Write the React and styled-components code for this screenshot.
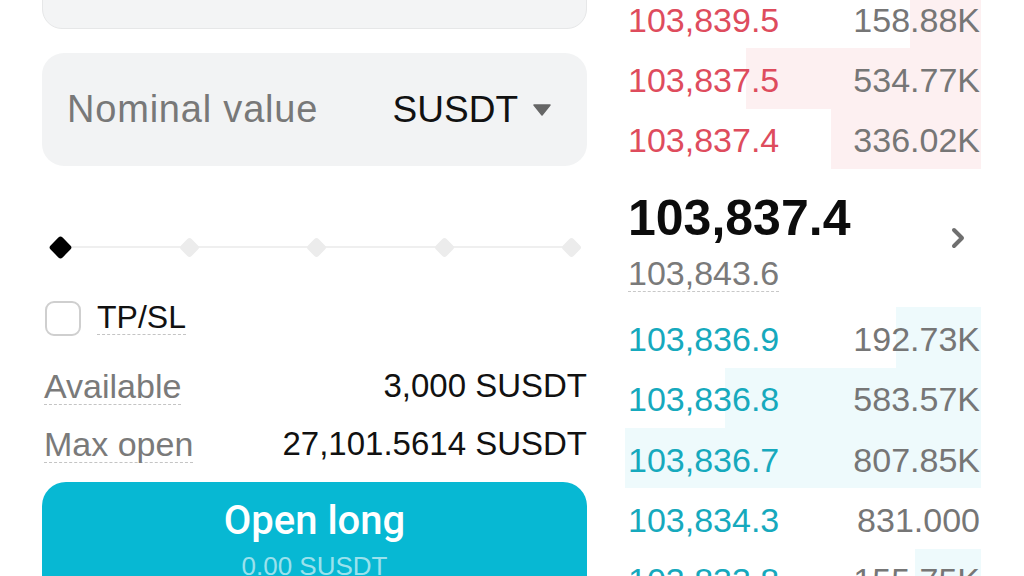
import React from "react";
import styled, { createGlobalStyle } from "styled-components";

const GlobalStyle = createGlobalStyle`
  html, body {
    margin: 0;
    padding: 0;
    background: #ffffff;
    font-family: "Liberation Sans", Arial, sans-serif;
  }
`;

const asks = [
  { price: "103,839.5", qty: "158.88K", depth: 20 },
  { price: "103,837.5", qty: "534.77K", depth: 66 },
  { price: "103,837.4", qty: "336.02K", depth: 42 },
];

const bids = [
  { price: "103,836.9", qty: "192.73K", depth: 24 },
  { price: "103,836.8", qty: "583.57K", depth: 72 },
  { price: "103,836.7", qty: "807.85K", depth: 100 },
  { price: "103,834.3", qty: "831.000", depth: 0 },
  { price: "103,833.8", qty: "155.75K", depth: 18.5 },
];

function App() {
  return (
    <>
      <GlobalStyle />
      <Page>
        <OrderForm>
          <TopField />
          <NominalField>
            <FieldLabel>Nominal value</FieldLabel>
            <UnitPicker>
              SUSDT
              <svg width="18" height="12" viewBox="0 0 18 12">
                <path d="M1 1 H17 L9 11 Z" fill="#666" strokeLinejoin="round" stroke="#666" strokeWidth="1.5" />
              </svg>
            </UnitPicker>
          </NominalField>

          <Slider>
            <Track />
            <Stops>
              <Stop $active />
              <Stop />
              <Stop />
              <Stop />
              <Stop />
            </Stops>
          </Slider>

          <CheckRow>
            <Checkbox />
            <Hint $dark>TP/SL</Hint>
          </CheckRow>

          <InfoRow $first>
            <Hint>Available</Hint>
            <Value>3,000 SUSDT</Value>
          </InfoRow>
          <InfoRow>
            <Hint>Max open</Hint>
            <Value>27,101.5614 SUSDT</Value>
          </InfoRow>

          <LongButton>
            <ButtonTitle>Open long</ButtonTitle>
            <ButtonSub>0.00 SUSDT</ButtonSub>
          </LongButton>
        </OrderForm>

        <Book>
          {asks.map((row) => (
            <BookRow key={row.price}>
              <Depth $side="ask" style={{ width: `${row.depth}%` }} />
              <Price $side="ask">{row.price}</Price>
              <Qty>{row.qty}</Qty>
            </BookRow>
          ))}

          <MidBlock>
            <MidPrices>
              <LastPrice>103,837.4</LastPrice>
              <MarkPrice>103,843.6</MarkPrice>
            </MidPrices>
            <svg width="14" height="22" viewBox="0 0 14 22">
              <path d="M3 3 L11 11 L3 19" fill="none" stroke="#6f6f6f" strokeWidth="4" strokeLinecap="round" strokeLinejoin="round" />
            </svg>
          </MidBlock>

          {bids.map((row) => (
            <BookRow key={row.price}>
              <Depth $side="bid" style={{ width: `${row.depth}%` }} />
              <Price $side="bid">{row.price}</Price>
              <Qty>{row.qty}</Qty>
            </BookRow>
          ))}
        </Book>
      </Page>
    </>
  );
}

export default App;

const Page = styled.div`
  width: 1024px;
  height: 576px;
  overflow: hidden;
  display: flex;
  align-items: flex-start;
  gap: 38px;
  padding-left: 42px;
  box-sizing: border-box;
`;

const OrderForm = styled.div`
  width: 545px;
  flex-shrink: 0;
  display: flex;
  flex-direction: column;
  margin-top: -31px;
`;

const TopField = styled.div`
  height: 60px;
  box-sizing: border-box;
  background: #f3f4f5;
  border: 1px solid #e6e7e8;
  border-radius: 20px;
`;

const NominalField = styled.div`
  margin-top: 24px;
  height: 113px;
  background: #f2f3f4;
  border-radius: 22px;
  display: flex;
  align-items: center;
  justify-content: space-between;
  padding: 0 36px 0 25px;
`;

const FieldLabel = styled.span`
  font-size: 38px;
  letter-spacing: 0.8px;
  color: #787878;
`;

const UnitPicker = styled.span`
  display: flex;
  align-items: center;
  gap: 15px;
  font-size: 37px;
  color: #111;
`;

const Slider = styled.div`
  position: relative;
  margin-top: 61px;
  height: 40px;
  padding: 0 16px 0 18px;
  display: flex;
  align-items: center;
`;

const Track = styled.div`
  position: absolute;
  left: 18px;
  right: 16px;
  top: 19px;
  height: 2px;
  background: #efefef;
`;

const Stops = styled.div`
  position: relative;
  flex: 1;
  display: flex;
  align-items: center;
  justify-content: space-between;
  margin: 0 -8px;
`;

const Stop = styled.div`
  width: ${(p) => (p.$active ? 17 : 15)}px;
  height: ${(p) => (p.$active ? 17 : 15)}px;
  border-radius: 3px;
  transform: rotate(45deg);
  background: ${(p) => (p.$active ? "#000" : "#ececec")};
`;

const CheckRow = styled.div`
  margin-top: 33px;
  height: 36px;
  display: flex;
  align-items: center;
  gap: 16px;
  padding-left: 3px;
`;

const Checkbox = styled.div`
  width: 36px;
  height: 35px;
  box-sizing: border-box;
  border: 2px solid #cfcfcf;
  border-radius: 9px;
`;

const Hint = styled.span`
  font-size: ${(p) => (p.$dark ? 32 : 34)}px;
  line-height: ${(p) => (p.$dark ? 32 : 34)}px;
  padding-bottom: 1px;
  color: ${(p) => (p.$dark ? "#111" : "#7a7a7a")};
  border-bottom: 1.5px dashed #c4c4c4;
`;

const InfoRow = styled.div`
  margin-top: ${(p) => (p.$first ? 33 : 22)}px;
  height: 36px;
  display: flex;
  align-items: flex-start;
  justify-content: space-between;
  padding-left: 2px;
`;

const Value = styled.span`
  font-size: 33px;
  line-height: 34px;
  color: #111;
`;

const LongButton = styled.div`
  margin-top: 19px;
  height: 120px;
  box-sizing: border-box;
  padding-top: 17px;
  border-radius: 24px;
  background: #07b8d3;
  display: flex;
  flex-direction: column;
  align-items: center;
`;

const ButtonTitle = styled.span`
  font-family: Roboto, "Liberation Sans", sans-serif;
  font-weight: 500;
  font-size: 40px;
  line-height: 44px;
  color: #ffffff;
`;

const ButtonSub = styled.span`
  margin-top: 8px;
  font-size: 26px;
  line-height: 30px;
  color: rgba(255, 255, 255, 0.6);
`;

const Book = styled.div`
  width: 356px;
  flex-shrink: 0;
  margin-top: -12px;
  display: flex;
  flex-direction: column;
`;

const BookRow = styled.div`
  position: relative;
  height: 60.4px;
  display: flex;
  align-items: center;
  justify-content: space-between;
  padding: 3px 1px 0 3px;
  box-sizing: border-box;
`;

const Depth = styled.div`
  position: absolute;
  right: 0;
  top: 0;
  bottom: 0;
  background: ${(p) => (p.$side === "ask" ? "#fdf0f1" : "#eefafc")};
`;

const Price = styled.span`
  position: relative;
  font-size: 34px;
  line-height: 34px;
  color: ${(p) => (p.$side === "ask" ? "#de4c5d" : "#16a9bd")};
`;

const Qty = styled.span`
  position: relative;
  font-size: 34px;
  line-height: 34px;
  color: #767676;
`;

const MidBlock = styled.div`
  height: 138px;
  display: flex;
  align-items: center;
  justify-content: space-between;
  padding: 0 16px 0 3px;
  box-sizing: border-box;
`;

const MidPrices = styled.div`
  display: flex;
  flex-direction: column;
  align-items: flex-start;
  padding-top: 9px;
`;

const LastPrice = styled.span`
  font-size: 50px;
  line-height: 50px;
  font-weight: 700;
  color: #0c0c0c;
`;

const MarkPrice = styled.span`
  margin-top: 13px;
  font-size: 34px;
  line-height: 34px;
  padding-bottom: 1px;
  color: #7a7a7a;
  border-bottom: 1.5px dashed #c8c8c8;
`;
